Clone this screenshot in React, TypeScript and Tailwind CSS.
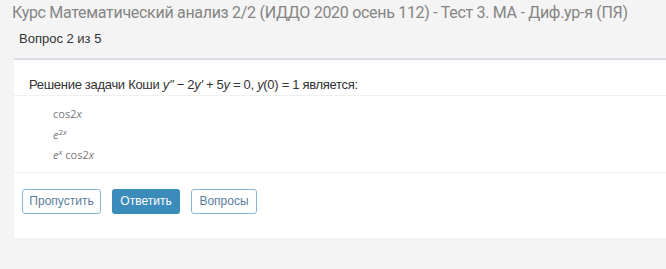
export default function App() {
  return (
    <div className="min-h-[269px] bg-[#f4f4f4] font-['Liberation_Sans',sans-serif]">
      {/* Header */}
      <div className="px-[12px] pt-[2px]">
        <h1 className="whitespace-nowrap font-['Roboto',sans-serif] text-[16px] leading-[22px] tracking-[-0.3px] text-[#858585]">
          Курс Математический анализ 2/2 (ИДДО 2020 осень 112) - Тест 3. МА - Диф.ур-я (ПЯ)
        </h1>
        <div className="pl-[7px] pt-[6px] text-[13px] leading-[18px] text-[#333]">Вопрос 2 из 5</div>
      </div>

      {/* Card */}
      <div className="ml-[14px] mt-[10px] border-t-2 border-[#d9dde5] bg-white">
        <div className="border-b border-[#f0f0f0] px-[15px] pt-[16px] pb-[1px] text-[13px] leading-[18px] tracking-[-0.3px] text-[#333]">
          Решение задачи Коши <i>y''</i> − 2<i>y'</i> + 5<i>y</i> = 0, <i>y</i>(0) = 1 является:
        </div>
        <div className="flex flex-col border-b border-[#f0f0f0] pl-[39px] pt-[8px] pb-[6px] font-['Open_Sans',sans-serif] text-[11px] leading-[20.5px] text-[#777]">
          <div>
            cos2<i>x</i>
          </div>
          <div>
            <i>e</i>
            <sup className="text-[8px]">
              2<i>x</i>
            </sup>
          </div>
          <div>
            <i>e</i>
            <sup className="text-[8px]">
              <i>x</i>
            </sup>
            <span className="ml-[3px]">
              cos2<i>x</i>
            </span>
          </div>
        </div>
        <div className="flex gap-[11px] px-[8px] pt-[16px] pb-[24px]">
          <button className="h-[25px] w-[79px] rounded-[3px] border border-[#8ab6d6] text-[12px] text-[#5a7e9c]">
            Пропустить
          </button>
          <button className="h-[25px] w-[68px] rounded-[3px] bg-[#3b8bbb] text-[12px] text-white">
            Ответить
          </button>
          <button className="h-[25px] w-[66px] rounded-[3px] border border-[#8ab6d6] text-[12px] text-[#5a7e9c]">
            Вопросы
          </button>
        </div>
      </div>
    </div>
  )
}
